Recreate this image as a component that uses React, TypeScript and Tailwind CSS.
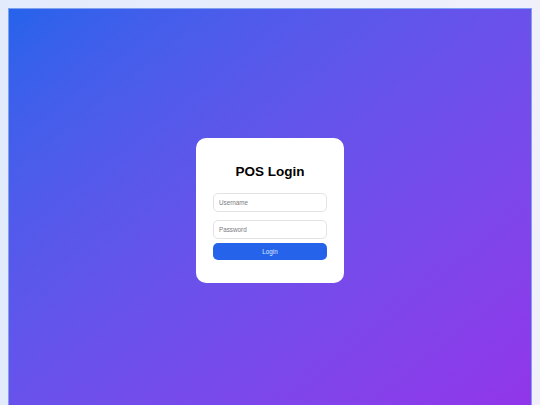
import React from "react";

export default function App() {
  return (
    <div
      className="w-[540px] h-[405px] overflow-hidden bg-gradient-to-r from-[#e2ebfc] to-[#f0f0fb] pt-[8px] pl-[8px] pr-[8px]"
      style={{ fontFamily: '"Liberation Sans", Arial, sans-serif' }}
    >
      <div className="w-[524px] h-[420px] border border-[#7da0f0] bg-gradient-to-br from-[#2563eb] to-[#9333ea] flex items-start justify-center pt-[129px]">
        <div className="w-[148px] h-[145px] bg-white rounded-[10px] px-[17px] pt-[24px] flex flex-col">
          <h1 className="text-[13.5px] leading-[20px] font-bold text-black text-center">POS Login</h1>
          <input
            className="mt-[11px] w-full h-[19px] border border-[#e3e3e7] rounded-[5px] px-[5px] text-[6.3px] placeholder:text-[#7a7a80] outline-none"
            placeholder="Username"
          />
          <input
            className="mt-[8px] w-full h-[19px] border border-[#e3e3e7] rounded-[5px] px-[5px] text-[6.3px] placeholder:text-[#7a7a80] outline-none"
            placeholder="Password"
            type="password"
          />
          <button className="mt-[4px] w-full h-[17px] bg-[#2563eb] rounded-[5px] text-[6.3px] text-[#dbe6ff]">
            Login
          </button>
        </div>
      </div>
    </div>
  );
}
